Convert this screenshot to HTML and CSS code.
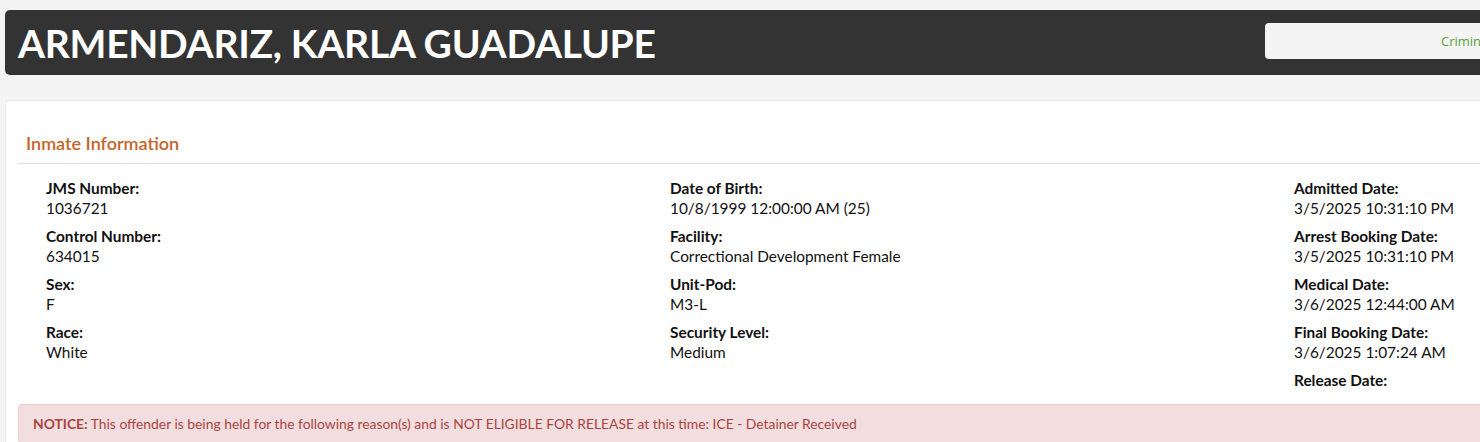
FILE: index.html
```html
<!DOCTYPE html>
<html>
<head>
<meta charset="utf-8">
<link rel="stylesheet" href="styles.css">
</head>
<body>
<div class="page">
  <header class="header">
    <h1 class="name">ARMENDARIZ, KARLA GUADALUPE</h1>
    <div class="tab-box"><span class="tab-text">Criminal History</span></div>
  </header>
  <section class="panel">
    <h2 class="section-title">Inmate Information</h2>
    <div class="cols">
      <div class="col">
        <div class="field"><div class="label">JMS Number:</div><div class="value">1036721</div></div>
        <div class="field"><div class="label">Control Number:</div><div class="value">634015</div></div>
        <div class="field"><div class="label">Sex:</div><div class="value">F</div></div>
        <div class="field"><div class="label">Race:</div><div class="value">White</div></div>
      </div>
      <div class="col">
        <div class="field"><div class="label">Date of Birth:</div><div class="value">10/8/1999 12:00:00 AM (25)</div></div>
        <div class="field"><div class="label">Facility:</div><div class="value">Correctional Development Female</div></div>
        <div class="field"><div class="label">Unit-Pod:</div><div class="value">M3-L</div></div>
        <div class="field"><div class="label">Security Level:</div><div class="value">Medium</div></div>
      </div>
      <div class="col">
        <div class="field"><div class="label">Admitted Date:</div><div class="value">3/5/2025 10:31:10 PM</div></div>
        <div class="field"><div class="label">Arrest Booking Date:</div><div class="value">3/5/2025 10:31:10 PM</div></div>
        <div class="field"><div class="label">Medical Date:</div><div class="value">3/6/2025 12:44:00 AM</div></div>
        <div class="field"><div class="label">Final Booking Date:</div><div class="value">3/6/2025 1:07:24 AM</div></div>
        <div class="field"><div class="label">Release Date:</div><div class="value"></div></div>
      </div>
    </div>
    <div class="notice"><strong>NOTICE:</strong> This offender is being held for the following reason(s) and is NOT ELIGIBLE FOR RELEASE at this time: ICE - Detainer Received</div>
  </section>
</div>
</body>
</html>
```
FILE: styles.css
```css
html, body {
  margin: 0;
  padding: 0;
  overflow: hidden;
  background: #f4f4f4;
  font-family: Lato, "Open Sans", sans-serif;
  color: #111;
}
.page {
  width: 1920px;
  padding: 10px 0 0 5px;
}
.header {
  display: flex;
  align-items: center;
  height: 65px;
  background: #333333;
  border-radius: 5px 0 0 5px;
  padding-left: 13px;
}
.name {
  margin: 0;
  color: #fff;
  font-size: 39px;
  font-weight: 700;
  line-height: 44px;
  width: 1247px;
  letter-spacing: -0.28px;
}
.tab-box {
  height: 36px;
  flex: 1;
  background: #f4f4f4;
  border-radius: 4px;
  display: flex;
  align-items: center;
  padding-left: 176px;
  margin-top: -4px;
}
.tab-text {
  font-family: "Open Sans", sans-serif;
  font-size: 13px;
  color: #5c9c3c;
}
.panel {
  margin-top: 25px;
  background: #fff;
  border-top: 1px solid #e6e6e6;
  border-left: 1px solid #ececec;
  padding: 0 0 20px 12px;
  min-height: 400px;
}
.section-title {
  margin: 32px 0 0;
  padding: 0 0 10px 8px;
  border-bottom: 1px solid #dddddd;
  font-size: 18px;
  line-height: 20px;
  font-weight: 600;
  color: #c4652a;
}
.cols {
  display: flex;
  padding: 14px 0 0 28px;
}
.col {
  width: 624px;
}
.field {
  margin-bottom: 8px;
  font-size: 15.4px;
  line-height: 20px;
}
.label {
  font-weight: 700;
}
.value {
  min-height: 20px;
}
.notice {
  margin-top: -14px;
  background: #f2dede;
  border: 1px solid #ebccd1;
  border-radius: 4px;
  color: #a94442;
  font-size: 13.85px;
  line-height: 18px;
  padding: 10px 14px;
}
.notice strong {
  font-weight: 700;
}
```
